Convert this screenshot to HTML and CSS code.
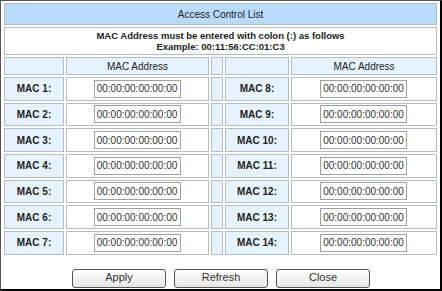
FILE: index.html
```html
<!DOCTYPE html>
<html lang="en">
<head>
<meta charset="UTF-8">
<title>Access Control List</title>
<link rel="stylesheet" href="styles.css">
</head>
<body>
<div class="frame">
    <table class="acl">
        <colgroup>
            <col class="c-label1">
            <col class="c-input1">
            <col class="c-gap">
            <col class="c-label2">
            <col class="c-input2">
        </colgroup>
        <tr>
            <td colspan="5" class="title">Access Control List</td>
        </tr>
        <tr>
            <td colspan="5" class="note">MAC Address must be entered with colon (:) as follows<br>Example: 00:11:56:CC:01:C3</td>
        </tr>
        <tr class="head">
            <td></td>
            <td>MAC Address</td>
            <td></td>
            <td></td>
            <td>MAC Address</td>
        </tr>
        <tr class="row">
            <td class="label">MAC 1:</td>
            <td class="field"><input type="text" value="00:00:00:00:00:00"></td>
            <td class="gap"></td>
            <td class="label">MAC 8:</td>
            <td class="field"><input type="text" value="00:00:00:00:00:00"></td>
        </tr>
        <tr class="row">
            <td class="label">MAC 2:</td>
            <td class="field"><input type="text" value="00:00:00:00:00:00"></td>
            <td class="gap"></td>
            <td class="label">MAC 9:</td>
            <td class="field"><input type="text" value="00:00:00:00:00:00"></td>
        </tr>
        <tr class="row">
            <td class="label">MAC 3:</td>
            <td class="field"><input type="text" value="00:00:00:00:00:00"></td>
            <td class="gap"></td>
            <td class="label">MAC 10:</td>
            <td class="field"><input type="text" value="00:00:00:00:00:00"></td>
        </tr>
        <tr class="row">
            <td class="label">MAC 4:</td>
            <td class="field"><input type="text" value="00:00:00:00:00:00"></td>
            <td class="gap"></td>
            <td class="label">MAC 11:</td>
            <td class="field"><input type="text" value="00:00:00:00:00:00"></td>
        </tr>
        <tr class="row">
            <td class="label">MAC 5:</td>
            <td class="field"><input type="text" value="00:00:00:00:00:00"></td>
            <td class="gap"></td>
            <td class="label">MAC 12:</td>
            <td class="field"><input type="text" value="00:00:00:00:00:00"></td>
        </tr>
        <tr class="row">
            <td class="label">MAC 6:</td>
            <td class="field"><input type="text" value="00:00:00:00:00:00"></td>
            <td class="gap"></td>
            <td class="label">MAC 13:</td>
            <td class="field"><input type="text" value="00:00:00:00:00:00"></td>
        </tr>
        <tr class="row">
            <td class="label">MAC 7:</td>
            <td class="field"><input type="text" value="00:00:00:00:00:00"></td>
            <td class="gap"></td>
            <td class="label">MAC 14:</td>
            <td class="field"><input type="text" value="00:00:00:00:00:00"></td>
        </tr>
    </table>

    <div class="buttons">
        <button type="button">Apply</button>
        <button type="button">Refresh</button>
        <button type="button">Close</button>
    </div>
</div>
</body>
</html>
```

FILE: styles.css
```css
body {
    margin: 0;
    padding: 0;
    background-color: #fff;
    font-family: "Liberation Sans", Arial, sans-serif;
    font-size: 10px;
    color: #222;
}

.frame {
    box-sizing: border-box;
    width: 442px;
    height: 291px;
    overflow: hidden;
    border-left: 1px solid #555;
    border-top: 1px solid #555;
    border-right: 2px solid #000;
    border-bottom: 2px solid #000;
    padding-left: 1px;
}

.acl {
    width: 437px;
    table-layout: fixed;
    border: none;
    border-spacing: 2px;
    background-color: #fff;
}

.acl td {
    box-sizing: border-box;
    border: 1px solid #b4bcc4;
    padding: 0;
    text-align: center;
}

.c-label1 { width: 60px; }
.c-input1 { width: 143px; }
.c-gap { width: 12px; }
.c-label2 { width: 64px; }
.c-input2 { width: 146px; }

.title {
    background-color: #b9dcfd;
    height: 22px;
}

.note {
    font-weight: bold;
    font-size: 9.5px;
    height: 28px;
    line-height: 11px;
}

.head td {
    background-color: #e6f3ff;
    height: 18px;
}

.row td {
    height: 23.67px;
}

.label {
    background-color: #e6f3ff;
    font-weight: bold;
}

.gap {
    background-color: #e6f3ff;
}

.field input {
    box-sizing: border-box;
    width: 87px;
    height: 18px;
    margin: 0 0 0 -1px;
    border: 1px solid #a0a0a0;
    padding: 0 1px;
    font-family: "Liberation Sans", Arial, sans-serif;
    font-size: 10px;
    color: #333;
    text-align: center;
    vertical-align: middle;
}

.buttons {
    display: flex;
    justify-content: center;
    gap: 8px;
    margin-top: 12px;
}

.buttons button {
    width: 94px;
    height: 19px;
    padding: 0 0 3px;
    border: 1px solid #555;
    border-radius: 3px;
    background: linear-gradient(#ffffff, #e6e6e6);
    font-family: "Liberation Sans", Arial, sans-serif;
    font-size: 11px;
    color: #333;
}
```
